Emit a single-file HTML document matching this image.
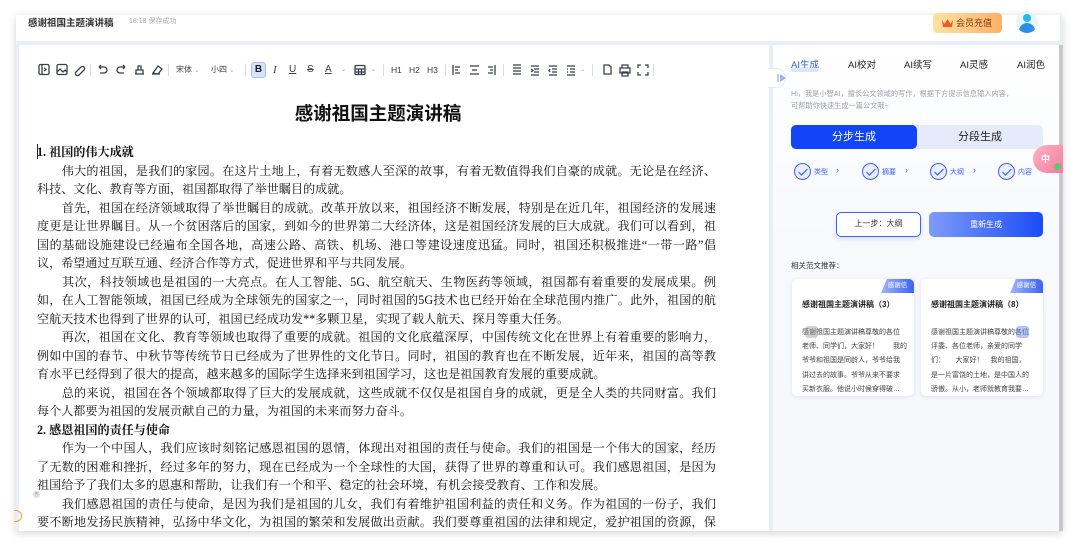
<!DOCTYPE html>
<html><head><meta charset="utf-8">
<style>
*{margin:0;padding:0;box-sizing:border-box}
body{width:1080px;height:546px;background:#fff;position:relative;overflow:hidden;font-family:"Liberation Sans","Noto Sans CJK SC",sans-serif;color:#222}
.a{position:absolute}
#win{left:16px;top:15px;width:1046px;height:516px;background:#e8eff9;box-shadow:0 2px 8px rgba(0,0,0,.18)}
#hdr{left:16px;top:15px;width:1044px;height:26px;background:#fff}
#ed{left:19px;top:45px;width:750px;height:486px;background:#fff;overflow:hidden}
#rp{left:773px;top:45px;width:286px;height:486px;background:linear-gradient(#fff,#f7f9fd 40%,#f6f8fc)}
#rb{left:1059px;top:45px;width:4px;height:486px;background:#c8c8c8}
.tb{position:absolute;top:63px;height:14px;color:#3a3f4a;font-size:9px;line-height:14px}
.sep{position:absolute;top:64px;width:1px;height:12px;background:#d8dce3}
.txt{left:37px;top:143px;width:679px;font-family:"Liberation Serif","Noto Serif CJK SC",serif;font-size:12.1px;line-height:18.5px;color:#111}
.txt div{text-align:justify;text-align-last:justify;white-space:nowrap;height:18.5px}
.txt div.l{text-align-last:left}
.txt b{font-weight:bold}
.ic{stroke:#3a3f4a;fill:none;stroke-width:1.3}
.tab{position:absolute;top:57px;font-size:9.5px;color:#222}
.st{position:absolute;top:163px;width:17px;height:17px;border:1.3px solid #3d63f0;border-radius:50%;background:#e8edff}
.stl{position:absolute;top:167px;font-size:7px;color:#3d63f0}
.card{position:absolute;top:279px;width:122px;height:117px;background:#fff;border-radius:5px;box-shadow:0 1px 4px rgba(40,60,120,.12)}
.card .t{position:absolute;left:10px;top:20px;font-size:8px;font-weight:bold;color:#222}
.card .p{position:absolute;left:10px;top:47px;width:106px;font-size:7px;line-height:14.2px;color:#444;white-space:nowrap}
.badge{position:absolute;right:0;top:0;width:33px;height:14px;background:linear-gradient(90deg,#9fb4ff,#3d63f0);color:#fff;font-size:6.5px;line-height:14px;text-align:center;border-radius:0 5px 0 0;clip-path:polygon(18% 0,100% 0,100% 100%,0 100%)}
</style></head><body>
<div class="a" id="win"></div>
<div class="a" id="hdr"></div>
<div class="a" style="left:28px;top:15px;font-size:9.5px;font-weight:bold;color:#333">感谢祖国主题演讲稿</div>
<div class="a" style="left:129px;top:16px;font-size:7px;color:#aaa">18:18 保存成功</div>
<div class="a" style="left:933px;top:13px;width:69px;height:20px;border-radius:4px;background:linear-gradient(90deg,#ffe3a0,#ffb067);font-size:9px;color:#7a3a10;line-height:20px;padding-left:23px">会员充值</div>
<svg class="a" style="left:941px;top:18px" width="13" height="10"><path d="M1 2 L3.5 6 L6.5 1 L9.5 6 L12 2 L11 9 L2 9Z" fill="#f05a28"/></svg>
<div class="a" style="left:1016px;top:11px;width:22px;height:22px;border-radius:50%;background:#e9f4ff;overflow:hidden"><div class="a" style="left:7px;top:3px;width:8px;height:8px;border-radius:50%;background:#29b6f6"></div><div class="a" style="left:3px;top:12px;width:16px;height:12px;border-radius:8px 8px 0 0;background:#2a8fe8"></div></div>

<div class="a" id="ed"></div>
<div class="a" id="rp"></div>
<div class="a" id="rb"></div>

<svg class="a" style="left:36px;top:62px" width="380" height="16">
<g class="ic">
<rect x="3" y="2.5" width="10" height="10" rx="1.5"/><path d="M6 2.5v10M8 6l2 1.5-2 1.5"/>
<rect x="21" y="2.5" width="10" height="10" rx="1.5"/><path d="M21 10l3-3 3 3 2-2 2 2"/>
<path d="M40 10l5-5a2 2 0 0 1 3 3l-5 5a2 2 0 0 1-3-3l4-4"/>
<path d="M63 5h5a3 3 0 0 1 0 6h-4M63 5l2-2M63 5l2 2"/>
<path d="M89 5h-5a3 3 0 0 0 0 6h4M89 5l-2-2M89 5l-2 2"/>
<path d="M99 12h9M100 12V8h7v4M102 8V4h3v4"/>
<path d="M116 12h8M117 11l5-7 4 3-4 5z"/>
</g></svg>
<div class="sep" style="left:90px"></div><div class="sep" style="left:168px"></div><div class="sep" style="left:245px"></div><div class="sep" style="left:383px"></div><div class="sep" style="left:445px"></div><div class="sep" style="left:503px"></div><div class="sep" style="left:592px"></div><div class="sep" style="left:653px"></div>
<div class="tb" style="left:176px;font-size:8px">宋体 <span style="color:#999;font-size:6px">⌄</span></div>
<div class="tb" style="left:211px;font-size:8px">小四 <span style="color:#999;font-size:6px">⌄</span></div>
<div class="a" style="left:251px;top:62px;width:15px;height:16px;background:#d6e4ff;border:1px solid #a9c2f3;border-radius:3px;font-size:10px;font-weight:bold;text-align:center;line-height:14px;color:#222">B</div>
<div class="tb" style="left:273px;font-size:11px;font-style:italic;font-family:'Liberation Serif',serif">I</div>
<div class="tb" style="left:289px;font-size:10px;text-decoration:underline">U</div>
<div class="tb" style="left:307px;font-size:10px;text-decoration:line-through">S</div>
<div class="tb" style="left:325px;font-size:10px;text-decoration:underline">A</div>
<div class="tb" style="left:341px;color:#999;font-size:6px">⌄</div>
<svg class="a" style="left:354px;top:64px" width="14" height="12"><g class="ic"><rect x="1" y="1.5" width="10" height="9" rx="1"/><path d="M1 5h10M1 8h10M4.5 5v5.5M7.5 5v5.5"/></g></svg>
<div class="tb" style="left:371px;color:#999;font-size:6px">⌄</div>
<div class="tb" style="left:391px;font-size:8.5px">H1</div>
<div class="tb" style="left:409px;font-size:8.5px">H2</div>
<div class="tb" style="left:427px;font-size:8.5px">H3</div>
<svg class="a" style="left:450px;top:63px" width="210" height="14"><g class="ic" stroke-width="1.2">
<path d="M3 2v10M5 4h5M5 7h3M5 10h5"/>
<path d="M20 3h9M22 7h5M20 11h9"/>
<path d="M38 4h5M40 7h3M38 10h5M45 2v10"/>
<path d="M63 2h8M63 5h8M63 8h8M63 11h8"/>
<path d="M81 3h8M84 6h5M84 9h5M81 12h8M81 6l2 1.5-2 1.5"/>
<path d="M99 3h8M102 6h5M102 9h5M99 12h8M100 6l-1 1.5 1 1.5"/>
<path d="M117 3h8M120 6h5M120 9h5M117 12h8M117 6h1M117 9h1"/>
<path d="M154 2h5l2 2v7h-7z"/>
<path d="M170 5h10v5h-10zM172 5V2h6v3M172 9h6v4h-6z"/>
<path d="M188 5V2h3M195 2h3v3M198 9v3h-3M191 12h-3V9"/>
</g></svg>
<div class="tb" style="left:580px;color:#999;font-size:6px">⌄</div>

<div class="a" style="left:19px;top:100px;width:718px;text-align:center;font-size:18.5px;font-weight:bold;color:#111">感谢祖国主题演讲稿</div>
<div class="a" style="left:37px;top:144px;width:1px;height:15px;background:#222"></div>
<div class="a txt">
<div class="l"><b>1. 祖国的伟大成就</b></div>
<div>　　伟大的祖国，是我们的家园。在这片土地上，有着无数感人至深的故事，有着无数值得我们自豪的成就。无论是在经济、</div>
<div class="l">科技、文化、教育等方面，祖国都取得了举世瞩目的成就。</div>
<div>　　首先，祖国在经济领域取得了举世瞩目的成就。改革开放以来，祖国经济不断发展，特别是在近几年，祖国经济的发展速</div>
<div>度更是让世界瞩目。从一个贫困落后的国家，到如今的世界第二大经济体，这是祖国经济发展的巨大成就。我们可以看到，祖</div>
<div>国的基础设施建设已经遍布全国各地，高速公路、高铁、机场、港口等建设速度迅猛。同时，祖国还积极推进“一带一路”倡</div>
<div class="l">议，希望通过互联互通、经济合作等方式，促进世界和平与共同发展。</div>
<div>　　其次，科技领域也是祖国的一大亮点。在人工智能、5G、航空航天、生物医药等领域，祖国都有着重要的发展成果。例</div>
<div>如，在人工智能领域，祖国已经成为全球领先的国家之一，同时祖国的5G技术也已经开始在全球范围内推广。此外，祖国的航</div>
<div class="l">空航天技术也得到了世界的认可，祖国已经成功发**多颗卫星，实现了载人航天、探月等重大任务。</div>
<div>　　再次，祖国在文化、教育等领域也取得了重要的成就。祖国的文化底蕴深厚，中国传统文化在世界上有着重要的影响力，</div>
<div>例如中国的春节、中秋节等传统节日已经成为了世界性的文化节日。同时，祖国的教育也在不断发展，近年来，祖国的高等教</div>
<div class="l">育水平已经得到了很大的提高，越来越多的国际学生选择来到祖国学习，这也是祖国教育发展的重要成就。</div>
<div>　　总的来说，祖国在各个领域都取得了巨大的发展成就，这些成就不仅仅是祖国自身的成就，更是全人类的共同财富。我们</div>
<div class="l">每个人都要为祖国的发展贡献自己的力量，为祖国的未来而努力奋斗。</div>
<div class="l"><b>2. 感恩祖国的责任与使命</b></div>
<div>　　作为一个中国人，我们应该时刻铭记感恩祖国的恩情，体现出对祖国的责任与使命。我们的祖国是一个伟大的国家，经历</div>
<div>了无数的困难和挫折，经过多年的努力，现在已经成为一个全球性的大国，获得了世界的尊重和认可。我们感恩祖国，是因为</div>
<div class="l">祖国给予了我们太多的恩惠和帮助，让我们有一个和平、稳定的社会环境，有机会接受教育、工作和发展。</div>
<div>　　我们感恩祖国的责任与使命，是因为我们是祖国的儿女，我们有着维护祖国利益的责任和义务。作为祖国的一份子，我们</div>
<div>要不断地发扬民族精神，弘扬中华文化，为祖国的繁荣和发展做出贡献。我们要尊重祖国的法律和规定，爱护祖国的资源，保</div>
</div>
<div class="a" style="left:33px;top:491px;width:7px;height:7px;border-radius:50%;background:#ddd;font-size:5px;text-align:center;line-height:7px;color:#777">×</div>
<div class="a" style="left:14px;top:510px;width:8px;height:12px;border:1.5px solid #f59a3a;border-left:none;border-radius:0 6px 6px 0"></div>

<div class="tab" style="left:791px;color:#2f5cf0">AI生成</div>
<div class="a" style="left:791px;top:68px;width:28px;height:4px;background:#dce6fb;border-radius:2px"></div>
<div class="tab" style="left:848px">AI校对</div>
<div class="tab" style="left:904px">AI续写</div>
<div class="tab" style="left:960px">AI灵感</div>
<div class="tab" style="left:1017px">AI润色</div>
<div class="a" style="left:768px;top:68px;width:18px;height:20px;border-radius:0 10px 10px 0;background:#fff;border:1px solid #e3eaf6;border-left:none"></div>
<svg class="a" style="left:777px;top:73px" width="10" height="10"><path d="M1 1v8" stroke="#9db4ea" stroke-width="1.3"/><path d="M3 1l6 4-6 4z" fill="#9db4ea"/></svg>
<div class="a" style="left:791px;top:88px;font-size:7.2px;line-height:12px;color:#9aa0aa;width:250px">Hi，我是小智AI，擅长公文领域的写作，根据下方提示信息输入内容，<br>可帮助你快速生成一篇公文哦~</div>
<div class="a" style="left:791px;top:125px;width:252px;height:24px;border-radius:5px;background:#e6ebfb"></div>
<div class="a" style="left:791px;top:125px;width:126px;height:24px;border-radius:5px;background:#1245f5;color:#fff;font-size:11px;text-align:center;line-height:24px">分步生成</div>
<div class="a" style="left:917px;top:125px;width:126px;height:24px;color:#222;font-size:11px;text-align:center;line-height:24px">分段生成</div>
<div class="st" style="left:794px"></div><div class="stl" style="left:814px">类型</div><div class="stl" style="left:836px;font-size:9px;top:165px">›</div>
<div class="st" style="left:862px"></div><div class="stl" style="left:882px">摘要</div><div class="stl" style="left:905px;font-size:9px;top:165px">›</div>
<div class="st" style="left:930px"></div><div class="stl" style="left:950px">大纲</div><div class="stl" style="left:973px;font-size:9px;top:165px">›</div>
<div class="st" style="left:998px"></div><div class="stl" style="left:1018px">内容</div>
<svg class="a" style="left:794px;top:163px" width="230" height="18"><g fill="none" stroke="#3d63f0" stroke-width="1.2"><path d="M4.5 9l3 3 6-6"/><path d="M72.5 9l3 3 6-6"/><path d="M140.5 9l3 3 6-6"/><path d="M208.5 9l3 3 6-6"/></g></svg>
<div class="a" style="left:836px;top:212px;width:85px;height:25px;border:1.3px solid #3d63f0;border-radius:5px;background:#fff;font-size:8px;text-align:center;line-height:22px;color:#333;box-shadow:0 2px 5px rgba(60,90,200,.15)">上一步：大纲</div>
<div class="a" style="left:929px;top:212px;width:114px;height:25px;border-radius:5px;background:linear-gradient(90deg,#7f9bfb,#1a4cf5);font-size:8px;text-align:center;line-height:25px;color:#fff">重新生成</div>
<div class="a" style="left:791px;top:260px;font-size:7.5px;color:#333">相关范文推荐：</div>
<div class="card" style="left:792px"><div class="badge">感谢信</div><div class="t">感谢祖国主题演讲稿（3）</div><div class="p">感谢祖国主题演讲稿尊敬的各位<br>老师、同学们，大家好！　　我的<br>爷爷和祖国是同龄人，爷爷给我<br>讲过去的故事。爷爷从来不要求<br>买新衣服。他说小时候穿得破…</div></div>
<div class="a" style="left:805px;top:326px;width:13px;height:12px;border-radius:3px;background:rgba(150,150,160,.45)"></div>
<div class="card" style="left:921px"><div class="badge">感谢信</div><div class="t">感谢祖国主题演讲稿（8）</div><div class="p">感谢祖国主题演讲稿尊敬的各位<br>评委、各位老师，亲爱的同学<br>们：　　大家好！　我的祖国，<br>是一片富饶的土地，是中国人的<br>骄傲。从小，老师就教育我要…</div></div>
<div class="a" style="left:1016px;top:326px;width:13px;height:12px;border-radius:3px;background:rgba(110,140,240,.5)"></div>
<div class="a" style="left:1033px;top:145px;width:30px;height:28px;border-radius:14px 0 0 14px;background:linear-gradient(135deg,#ffb3c6,#f27aa0);color:#fff;font-size:9px;line-height:28px;padding-left:8px;font-weight:bold">中</div>
<div class="a" style="left:1054px;top:163px;width:7px;height:7px;border-radius:50%;background:#5cc76b"></div>
</body></html>
